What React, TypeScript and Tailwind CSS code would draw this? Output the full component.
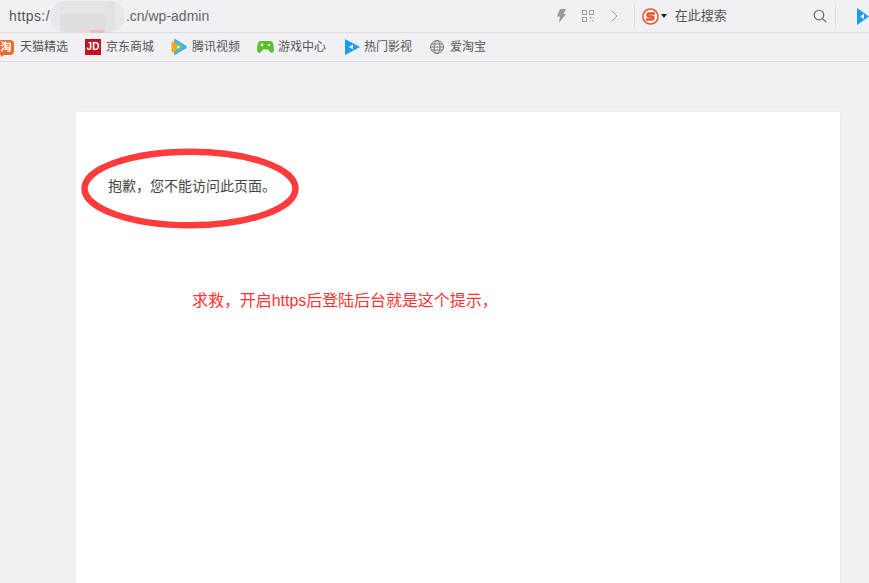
import React from "react";

const CJK = "font-['Liberation_Sans','Noto_Sans_CJK_SC',sans-serif]";

function Bookmark({ icon, label, className }: { icon: React.ReactNode; label: string; className: string }) {
  return (
    <div className={`flex items-center ${className}`}>
      {icon}
      <span className="text-[12px] leading-none text-[#555]">{label}</span>
    </div>
  );
}

export default function App() {
  return (
    <div className={`relative h-[583px] w-[869px] overflow-hidden bg-[#f1f1f1] ${CJK}`}>
      {/* address bar */}
      <div className="relative flex h-[33px] items-center border-b border-[#dcdce0] bg-[#f0f0f5]">
        <span className="ml-[9px] w-[542px] text-[14px] text-[#666]">
          <span className="tracking-[0.4px] text-[#555]">https:/</span>
          <span className="inline-block w-[76px]" />
          <span>.cn/wp-admin</span>
        </span>
        <svg className="ml-[8px] h-[14px] w-[9px]" viewBox="0 0 9 14">
          <path d="M3 0h6L6.500 5H9L2 14l1-6.500H0z" fill="#9a9a9a" />
        </svg>
        <svg className="ml-[16px] h-[12px] w-[12px]" viewBox="0 0 12 12" fill="none" stroke="#a0a0a0">
          <rect x="0.5" y="0.5" width="4" height="4" />
          <rect x="7.5" y="0.5" width="4" height="4" />
          <rect x="0.5" y="7.5" width="4" height="4" />
          <path d="M7.500 7.500h1.500v1.500M11.500 7.500v1M7.500 11.500h1M10 10l1.500 1.500" />
        </svg>
        <svg className="ml-[17px] h-[12px] w-[7px]" viewBox="0 0 7 12" fill="none" stroke="#999" strokeWidth="1">
          <path d="M1 1l5 5-5 5" />
        </svg>
        <div className="ml-[16px] h-[22px] w-px bg-[#dcdce0]" />
        <svg className="ml-[7px] h-[17px] w-[17px]" viewBox="0 0 17 17">
          <circle cx="8.500" cy="8.500" r="7.600" fill="#fff" stroke="#f0512b" strokeWidth="1.500" />
          <path d="M13 5.500H7.200c-2.400 0-2.400 3 0 3h2.600c2.400 0 2.400 3 0 3H4" fill="none" stroke="#f0512b" strokeWidth="2.300" />
        </svg>
        <div className="ml-[2px] h-0 w-0 border-x-[3px] border-t-[4px] border-x-transparent border-t-[#222]" />
        <span className="ml-[8px] w-[139px] text-[13px] text-[#555]">在此搜索</span>
        <svg className="h-[14px] w-[14px]" viewBox="0 0 14 14" fill="none" stroke="#666" strokeWidth="1.200">
          <circle cx="6" cy="6" r="4.800" />
          <path d="M9.600 9.600l3.600 3.600" />
        </svg>
        <div className="ml-[8px] h-[22px] w-px bg-[#dcdce0]" />
        <svg className="ml-[21px] h-[17px] w-[12px] shrink-0" viewBox="0 0 12 17">
          <path d="M0 0l12 8.500L0 17z" fill="#1d9bf0" />
          <path d="M7 5.800v5.400L3.400 8.500z" fill="#fff" />
        </svg>
      </div>

      {/* blurred host name */}
      <div className="absolute left-[50px] top-[1px] flex h-[31px] w-[75px] overflow-hidden rounded-[15px] bg-[#e8e8ec]">
        <div className="ml-[10px] flex w-[45px] flex-col">
          <div className="h-[13px] bg-[#e5e5e9]" />
          <div className="h-[18px] bg-[#dedee1]" />
        </div>
        <div className="w-[10px] bg-[#e2e2e5]" />
      </div>
      <div className="absolute left-[75px] top-[30px] flex h-[3px] w-[30px]">
        <div className="w-[15px] bg-[#f0d4d7]" />
        <div className="w-[15px] bg-[#efbcc1]" />
      </div>

      {/* bookmarks */}
      <div className="flex h-[29px] items-center border-b border-[#dcdce0] bg-[#f0f0f5]">
        <Bookmark
          className="w-[85px]"
          label="天猫精选"
          icon={
            <div className="relative ml-[-2px] mr-[6px] flex h-[15px] w-[16px] items-center justify-center rounded-[4px] bg-[#f0692f] text-[11px] font-bold leading-none text-white">
              淘
              <div className="absolute bottom-[-2px] left-[3px] h-0 w-0 border-r-[4px] border-t-[3px] border-r-transparent border-t-[#f0692f]" />
            </div>
          }
        />
        <Bookmark
          className="w-[86px]"
          label="京东商城"
          icon={
            <div className="mr-[5px] flex h-[16px] w-[16px] items-center justify-center bg-[#c4121f] text-[10px] font-bold leading-none text-white">
              JD
            </div>
          }
        />
        <Bookmark
          className="w-[86px]"
          label="腾讯视频"
          icon={
            <svg className="mr-[5px] h-[16px] w-[16px]" viewBox="0 0 16 16">
              <path d="M3 .8c0-.8.9-1 1.600-.6l10.600 6.600c.8.5.8 1.900 0 2.400L4.600 15.800c-.7.4-1.600.2-1.600-.6z" fill="#3eb4ea" />
              <path d="M.5 3.500c0-1 .9-1.300 1.700-.8l8 4.500c.7.400.7 1.200 0 1.600l-8 4.500c-.8.5-1.700.2-1.700-.8z" fill="#f7a823" />
              <path d="M5 5l5.500 3L5 11z" fill="#8bd22f" />
              <path d="M6.200 6.500l2.600 1.500-2.600 1.500z" fill="#fff" />
            </svg>
          }
        />
        <Bookmark
          className="w-[88px]"
          label="游戏中心"
          icon={
            <svg className="mr-[4px] h-[14px] w-[17px]" viewBox="0 0 17 14">
              <path d="M4 1h9c2 0 3 1.500 3.500 4l.5 5c.2 2.500-2.500 3.500-4 2l-2-2.500H6l-2 2.500c-1.500 1.500-4.200.5-4-2l.5-5C1 2.500 2 1 4 1z" fill="#5cc02d" />
              <path d="M3.500 5h3M5 3.500v3" stroke="#fff" strokeWidth="1.200" />
              <circle cx="12" cy="5" r="1.100" fill="#fff" />
            </svg>
          }
        />
        <Bookmark
          className="w-[85px]"
          label="热门影视"
          icon={
            <svg className="mr-[4px] h-[16px] w-[15px]" viewBox="0 0 15 16">
              <path d="M0 0l15 8L0 16z" fill="#1d9bf0" />
              <path d="M8 5.500v5L4 8z" fill="#fff" />
            </svg>
          }
        />
        <Bookmark
          className="w-[70px]"
          label="爱淘宝"
          icon={
            <svg className="mr-[6px] h-[14px] w-[14px]" viewBox="0 0 14 14" fill="none" stroke="#777" strokeWidth="1">
              <circle cx="7" cy="7" r="6.400" />
              <ellipse cx="7" cy="7" rx="3" ry="6.400" />
              <path d="M.6 7h12.800M1.500 4h11M1.500 10h11" />
            </svg>
          }
        />
      </div>

      {/* page */}
      <div className="mx-[76px] mt-[50px] h-[520px] w-[764px] bg-white shadow-[0_0_3px_rgba(0,0,0,0.06)]">
        <p className="pl-[32px] pt-[64px] text-[14px] leading-[20px] text-[#444]">抱歉，您不能访问此页面。</p>
        <p className="pl-[116px] pt-[95px] text-[16px] leading-[20px] tracking-[-0.05px] text-[#f33]">求救，开启https后登陆后台就是这个提示，</p>
      </div>

      {/* hand-drawn annotation ellipse */}
      <svg className="absolute left-[80px] top-[147px] h-[84px] w-[221px]" viewBox="0 0 221 84" fill="none">
        <ellipse cx="110" cy="41.500" rx="105.500" ry="36.800" stroke="#ff3b3b" strokeWidth="6.500" />
      </svg>
    </div>
  );
}
